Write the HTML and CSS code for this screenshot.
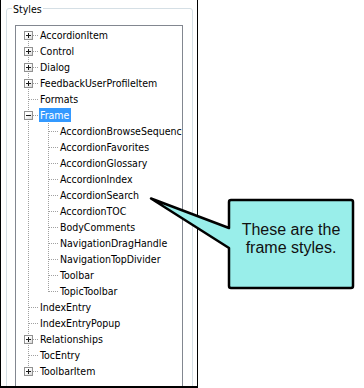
FILE: index.html
```html
<!DOCTYPE html>
<html>
<head>
<meta charset="utf-8">
<link rel="stylesheet" href="styles.css">
</head>
<body>
<div class="shot">
  <div class="group">
    <div class="group-title">Styles</div>
    <div class="tree">
      <div class="row"><span class="c first"><span class="box plus"></span></span><span class="label">AccordionItem</span></div>
      <div class="row"><span class="c tee"><span class="box plus"></span></span><span class="label">Control</span></div>
      <div class="row"><span class="c tee"><span class="box plus"></span></span><span class="label">Dialog</span></div>
      <div class="row"><span class="c tee"><span class="box plus"></span></span><span class="label">FeedbackUserProfileItem</span></div>
      <div class="row"><span class="c tee"></span><span class="label">Formats</span></div>
      <div class="row"><span class="c tee"><span class="box"></span></span><span class="label selected">Frame</span></div>
      <div class="row"><span class="c pipe"></span><span class="c tee"></span><span class="label">AccordionBrowseSequence</span></div>
      <div class="row"><span class="c pipe"></span><span class="c tee"></span><span class="label">AccordionFavorites</span></div>
      <div class="row"><span class="c pipe"></span><span class="c tee"></span><span class="label">AccordionGlossary</span></div>
      <div class="row"><span class="c pipe"></span><span class="c tee"></span><span class="label">AccordionIndex</span></div>
      <div class="row"><span class="c pipe"></span><span class="c tee"></span><span class="label">AccordionSearch</span></div>
      <div class="row"><span class="c pipe"></span><span class="c tee"></span><span class="label">AccordionTOC</span></div>
      <div class="row"><span class="c pipe"></span><span class="c tee"></span><span class="label">BodyComments</span></div>
      <div class="row"><span class="c pipe"></span><span class="c tee"></span><span class="label">NavigationDragHandle</span></div>
      <div class="row"><span class="c pipe"></span><span class="c tee"></span><span class="label">NavigationTopDivider</span></div>
      <div class="row"><span class="c pipe"></span><span class="c tee"></span><span class="label">Toolbar</span></div>
      <div class="row"><span class="c pipe"></span><span class="c elbow"></span><span class="label">TopicToolbar</span></div>
      <div class="row"><span class="c tee"></span><span class="label">IndexEntry</span></div>
      <div class="row"><span class="c tee"></span><span class="label">IndexEntryPopup</span></div>
      <div class="row"><span class="c tee"><span class="box plus"></span></span><span class="label">Relationships</span></div>
      <div class="row"><span class="c tee"></span><span class="label">TocEntry</span></div>
      <div class="row"><span class="c elbow"><span class="box plus"></span></span><span class="label">ToolbarItem</span></div>
    </div>
  </div>
</div>
<div class="callout">
  <svg class="callout-shape" width="215" height="102" viewBox="145 192 215 102">
    <path d="M231 200 H351 Q353 200 353 202 V286 Q353 288 351 288 H231 Q229 288 229 286 V248 L151 198.5 L229 228 V202 Q229 200 231 200 Z" fill="#99eeea" stroke="#000" stroke-width="2.5" stroke-linejoin="round"/>
  </svg>
  <p class="callout-text">These are the<br>frame styles.</p>
</div>
</body>
</html>
```
FILE: styles.css
```css
html, body {
  margin: 0;
  padding: 0;
  background: #fff;
}

body {
  width: 364px;
  height: 388px;
  overflow: hidden;
  font-family: "DejaVu Sans Condensed", "Liberation Sans", sans-serif;
  font-size: 10.5px;
  color: #000;
}

.shot {
  box-sizing: border-box;
  width: 198px;
  height: 388px;
  padding-top: 8px;
  border-left: 1px solid #000;
  border-right: 1px solid #000;
  border-bottom: 2px solid #000;
  overflow: hidden;
}

.group {
  box-sizing: border-box;
  width: 187px;
  height: 420px;
  margin-left: 5px;
  border: 1px solid #d5dfe5;
  border-radius: 3px;
  display: flex;
  flex-direction: column;
  align-items: flex-start;
}

.group-title {
  margin: -6px 0 0 5px;
  padding: 0 1px;
  line-height: 13px;
  height: 13px;
  background: #fff;
}

.tree {
  --dv: repeating-linear-gradient(to bottom, #a0a0a0 0 1px, transparent 1px 2px);
  --dh: repeating-linear-gradient(to right, #a0a0a0 0 1px, transparent 1px 2px);
  box-sizing: border-box;
  width: 168px;
  height: 400px;
  margin: 9px 0 0 8px;
  padding: 1px 0 0 3px;
  border: 1px solid #828790;
  overflow: hidden;
}

.row {
  display: flex;
  height: 16px;
  white-space: nowrap;
}

.c {
  flex: none;
  display: block;
  width: 20px;
  height: 16px;
}

.pipe {
  background: var(--dv) 9px 0 / 1px 16px no-repeat;
}

.tee {
  background: var(--dh) 10px 8px / 10px 1px no-repeat, var(--dv) 9px 0 / 1px 16px no-repeat;
}

.first {
  background: var(--dh) 10px 8px / 10px 1px no-repeat, var(--dv) 9px 8px / 1px 8px no-repeat;
}

.elbow {
  background: var(--dh) 10px 8px / 10px 1px no-repeat, var(--dv) 9px 0 / 1px 9px no-repeat;
}

.box {
  display: block;
  width: 7px;
  height: 7px;
  margin: 4px 0 0 5px;
  border: 1px solid #919191;
  background:
    linear-gradient(#1a1a1a, #1a1a1a) center / 5px 1px no-repeat,
    linear-gradient(135deg, #ffffff 35%, #d8d8d8);
}

.box.plus {
  background:
    linear-gradient(#1a1a1a, #1a1a1a) center / 5px 1px no-repeat,
    linear-gradient(#1a1a1a, #1a1a1a) center / 1px 5px no-repeat,
    linear-gradient(135deg, #ffffff 35%, #d8d8d8);
}

.label {
  flex: none;
  height: 14px;
  margin-top: 1px;
  padding: 0 1px;
  line-height: 14px;
}

.label.selected {
  background: #3399ff;
  color: #fff;
  padding-right: 2px;
}

.callout {
  position: absolute;
  left: 228px;
  top: 199px;
  width: 126px;
  height: 90px;
}

.callout-shape {
  position: absolute;
  left: -83px;
  top: -7px;
}

.callout-text {
  position: relative;
  margin: 0;
  padding-top: 22px;
  text-align: center;
  font-family: "Liberation Sans", Arial, sans-serif;
  font-size: 16px;
  line-height: 18px;
  color: #111;
}
```
